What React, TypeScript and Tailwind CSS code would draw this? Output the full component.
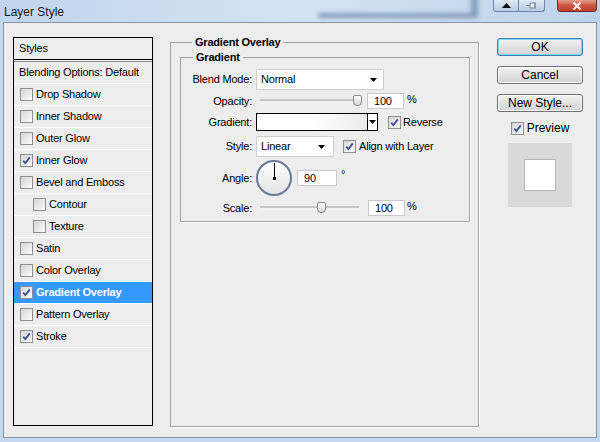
import React from 'react';

const font = { fontFamily: '"Liberation Sans", Arial, sans-serif' };

// small XP style checkbox
const Check: React.FC<{ on?: boolean }> = ({ on }) => (
  <span className="relative inline-block h-[13px] w-[13px] shrink-0 border border-[#8f8f8f] bg-gradient-to-br from-[#d6d6d6] to-[#fbfbfb]">
    {on && (
      <svg viewBox="0 0 11 11" className="absolute left-0 top-0 h-[11px] w-[11px]">
        <path d="M2.2 5.6 L4.4 8 L8.8 2.4" fill="none" stroke="#3d4f9a" strokeWidth="1.8" />
      </svg>
    )}
  </span>
);

const styleRows = [
  { name: 'Drop Shadow' },
  { name: 'Inner Shadow' },
  { name: 'Outer Glow' },
  { name: 'Inner Glow', on: true },
  { name: 'Bevel and Emboss' },
  { name: 'Contour', sub: true },
  { name: 'Texture', sub: true },
  { name: 'Satin' },
  { name: 'Color Overlay' },
  { name: 'Gradient Overlay', on: true, active: true },
  { name: 'Pattern Overlay' },
  { name: 'Stroke', on: true },
];

const Arrow = () => (
  <svg viewBox="0 0 7 4" className="h-[4px] w-[7px]">
    <path d="M0 0 H7 L3.5 4 Z" fill="#000" />
  </svg>
);

const Slider: React.FC<{ pos: number }> = ({ pos }) => (
  <div className="relative h-full w-[107px]">
    <div className="absolute left-[4px] right-[4px] top-1/2 h-[3px] -translate-y-1/2 border-t border-[#a9a9a9] border-b border-b-white bg-[#dcdcdc]" />
    <div
      className="absolute top-[2px] h-[11px] w-[9px] rounded-t-[2px] rounded-b-[4px] border border-[#8a8a8a] bg-gradient-to-b from-white to-[#d4d4d4]"
      style={{ left: pos }}
    />
  </div>
);

const Field: React.FC<{ value: string; w: string }> = ({ value, w }) => (
  <div className={`${w} flex h-[16px] items-center border border-[#c9c9c9] bg-white pl-[6px]`}>{value}</div>
);

const Btn: React.FC<{ label: string; focus?: boolean; mt: string }> = ({ label, focus, mt }) => (
  <div
    className={`${mt} flex h-[18px] w-[86px] items-center justify-center rounded-[3px] border bg-gradient-to-b from-[#f3f3f3] to-[#d2d2d2] text-[12px] tracking-normal text-black ${
      focus
        ? 'border-[#3c7fb1] shadow-[inset_0_0_0_1px_#7fd6f7]'
        : 'border-[#707070] shadow-[inset_0_0_0_1px_#fcfcfc]'
    }`}
  >
    {label}
  </div>
);

export default function App() {
  return (
    <div className="flex h-[442px] w-[600px] flex-col overflow-hidden bg-[#c3d7ed] text-[11px] tracking-[-0.2px] text-black" style={font}>
      {/* title bar */}
      <div className="relative h-[22px] shrink-0 bg-gradient-to-r from-[#c1d5ec] via-[#d4e3f3] to-[#bed3ea]">
        <div className="absolute left-[318px] top-[-12px] h-[30px] w-[160px] border-b-[5px] border-r-[7px] border-[#56779c]/60 blur-[2px]" />
        <span className="absolute left-[4px] top-[3px] text-[12px] tracking-normal text-[#1a1a1a]">Layer Style</span>
        <div className="absolute left-[493px] top-0 flex h-[12px]">
          <div className="flex h-[12px] w-[26px] items-center justify-center rounded-bl-[3px] border border-t-0 border-[#6f87a6] bg-gradient-to-b from-[#dfeaf6] to-[#b7cbe3]">
            <svg viewBox="0 0 9 5" className="h-[5px] w-[9px]"><path d="M0 5 L4.5 0 L9 5 Z" fill="#000" /></svg>
          </div>
          <div className="flex h-[12px] w-[26px] items-center justify-center rounded-br-[3px] border border-l-0 border-t-0 border-[#6f87a6] bg-gradient-to-b from-[#dfeaf6] to-[#b7cbe3]">
            <svg viewBox="0 0 12 9" className="h-[9px] w-[12px]"><path d="M0 4.5 H4 M4 2 H9 V7 H4 Z M9 1 V8" fill="#e8e8e8" stroke="#7b8796" strokeWidth="1" /></svg>
          </div>
        </div>
        <div className="absolute left-[557px] top-0 flex h-[12px] w-[40px] items-center justify-center rounded-b-[4px] border border-t-0 border-[#6b2a2a] bg-gradient-to-b from-[#e4a08e] via-[#c9553f] to-[#c03f2c]">
          <svg viewBox="0 0 10 8" className="h-[8px] w-[10px]"><path d="M1.5 0.5 L8.5 7.5 M8.5 0.5 L1.5 7.5" stroke="#fff" strokeWidth="2" /></svg>
        </div>
      </div>

      {/* body */}
      <div className="mx-[3px] mb-[4px] flex flex-1 items-start border border-[#8395ab] bg-[#ededed]">
        {/* styles list */}
        <div className="ml-[9px] mt-[14px] h-[389px] w-[140px] shrink-0 border border-black">
          <div className="flex h-[22px] items-center border-b border-black pl-[5px]">Styles</div>
          <div className="h-[2px] border-b border-[#8c8c8c]" />
          <div className="flex h-[22px] items-center border-b border-white pl-[5px]">Blending Options: Default</div>
          {styleRows.map((r) => (
            <div
              key={r.name}
              className={`flex h-[22px] items-center gap-[3px] border-b border-white ${r.sub ? 'pl-[19px]' : 'pl-[6px]'} ${
                r.active ? 'bg-[#3399ff] font-bold text-white' : ''
              }`}
            >
              <Check on={r.on} />
              <span>{r.name}</span>
            </div>
          ))}
        </div>

        {/* gradient overlay panel */}
        <fieldset className="ml-[17px] mt-[13px] h-[391px] w-[309px] shrink-0 border border-[#a3a3a3] pl-[9px] shadow-[1px_1px_0_#fff]">
          <legend className="ml-[12px] px-[3px] font-bold leading-[13px]">Gradient Overlay</legend>
          <fieldset className="mt-[2px] w-[290px] border border-[#a3a3a3] pb-[5px] shadow-[1px_1px_0_#fff]">
            <legend className="ml-[12px] px-[3px] font-bold leading-[13px]">Gradient</legend>

            <div className="mt-[5px] flex h-[21px] items-center">
              <span className="w-[71px] text-right">Blend Mode:</span>
              <div className="ml-[4px] flex h-[21px] w-[128px] items-center justify-between border border-[#cfcfcf] bg-white pl-[4px] pr-[6px]">
                <span>Normal</span>
                <Arrow />
              </div>
            </div>

            <div className="mt-[3px] flex h-[16px] items-center">
              <span className="w-[71px] text-right">Opacity:</span>
              <div className="ml-[4px] h-full"><Slider pos={97} /></div>
              <div className="ml-[4px]"><Field value="100" w="w-[37px]" /></div>
              <span className="ml-[3px] -mt-[4px]">%</span>
            </div>

            <div className="mt-[4px] flex h-[18px] items-center">
              <span className="w-[71px] text-right">Gradient:</span>
              <div className="ml-[4px] flex h-[18px] w-[122px] border-[1.5px] border-black">
                <div className="flex-1 bg-gradient-to-r from-white via-white to-[#ececec]" />
                <div className="flex w-[10px] items-center justify-center border-l border-black bg-white">
                  <Arrow />
                </div>
              </div>
              <div className="ml-[10px] flex items-center gap-[2px]">
                <Check on />
                <span>Reverse</span>
              </div>
            </div>

            <div className="mt-[5px] flex h-[21px] items-center">
              <span className="w-[71px] text-right">Style:</span>
              <div className="ml-[4px] flex h-[21px] w-[78px] items-center justify-between border border-[#cfcfcf] bg-white pl-[4px] pr-[8px]">
                <span>Linear</span>
                <Arrow />
              </div>
              <div className="ml-[9px] flex items-center gap-[3px]">
                <Check on />
                <span>Align with Layer</span>
              </div>
            </div>

            <div className="mt-[3px] flex h-[36px] items-center">
              <span className="w-[71px] text-right">Angle:</span>
              <div className="relative ml-[4px] h-[36px] w-[36px] rounded-full border-2 border-[#6a7897] bg-gradient-to-b from-white to-[#e4e4e4]">
                <div className="absolute left-[16px] top-[1px] h-[16px] w-[1px] bg-black" />
                <div className="absolute left-[15px] top-[15px] h-[3px] w-[3px] bg-black" />
              </div>
              <div className="ml-[5px]"><Field value="90" w="w-[40px]" /></div>
              <span className="ml-[4px] -mt-[8px]">°</span>
            </div>

            <div className="mt-[4px] flex h-[16px] items-center">
              <span className="w-[71px] text-right">Scale:</span>
              <div className="ml-[4px] h-full"><Slider pos={61} /></div>
              <div className="ml-[5px]"><Field value="100" w="w-[37px]" /></div>
              <span className="ml-[2px] -mt-[4px]">%</span>
            </div>
          </fieldset>
        </fieldset>

        {/* buttons */}
        <div className="ml-[18px] flex w-[86px] shrink-0 flex-col items-center">
          <Btn label="OK" focus mt="mt-[15px]" />
          <Btn label="Cancel" mt="mt-[10px]" />
          <Btn label="New Style..." mt="mt-[10px]" />
          <div className="mt-[7px] flex items-center gap-[3px] text-[12px] tracking-normal">
            <Check on />
            <span>Preview</span>
          </div>
          <div className="mt-[6px] flex h-[64px] w-[64px] items-center justify-center bg-[#d9d9d9]">
            <div className="h-[32px] w-[32px] border border-[#b5b5b5] bg-white" />
          </div>
        </div>
      </div>
    </div>
  );
}
